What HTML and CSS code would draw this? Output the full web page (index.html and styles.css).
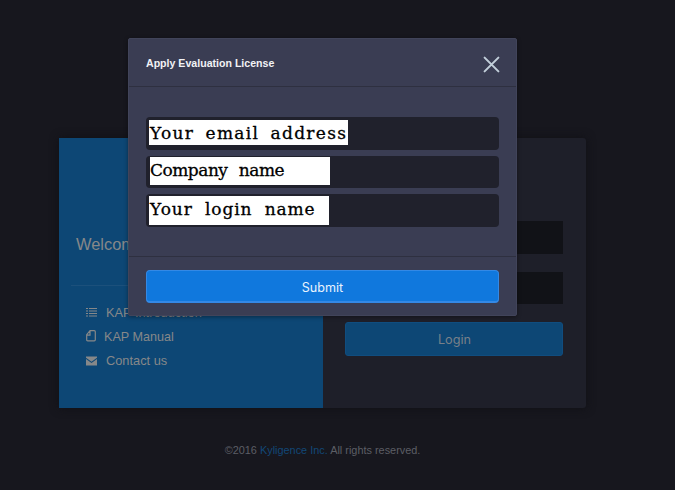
FILE: index.html
```
<!DOCTYPE html>
<html lang="en">
<head>
<meta charset="utf-8">
<title>Apply Evaluation License</title>
<link rel="stylesheet" href="styles.css">
</head>
<body>
<main class="page">
  <section class="login-card">
    <aside class="welcome">
      <h1 class="welcome-title">Welcome</h1>
      <ul class="links">
        <li><svg class="icon" viewBox="0 0 11 10"><path d="M0 1.500h2M0 4h2M0 6.500h2M0 9h2M3 1.500h8M3 4h8M3 6.500h8M3 9h8" stroke="currentColor" stroke-width="1.200"/></svg><span>KAP Introduction</span></li>
        <li class="manual"><svg class="icon doc" viewBox="0 0 10 12"><path d="M4 .7H8.300Q9.300.7 9.300 1.700V9.800q0 1-1 1H1.700q-1 0-1-1V4.600L4 .7V5.200H.7" fill="none" stroke="currentColor" stroke-width="1.200"/></svg><span>KAP Manual</span></li>
        <li><svg class="icon" viewBox="0 0 11 9"><path d="M0 0h11v1.200L5.500 5.200 0 1.200zM0 2.600 5.500 6.500 11 2.600V9H0z" fill="currentColor"/></svg><span>Contact us</span></li>
      </ul>
    </aside>
    <div class="login-form">
      <div class="login-input"></div>
      <div class="login-input"></div>
      <button class="login-button">Login</button>
    </div>
  </section>
  <footer class="footer">©2016 <span class="brand">Kyligence Inc.</span> All rights reserved.</footer>
</main>
<section class="modal" role="dialog">
  <header class="modal-header">
    <h2>Apply Evaluation License</h2>
    <svg class="close" viewBox="0 0 16 16"><path d="M1.500 1.500l13 13M14.500 1.500l-13 13" stroke="currentColor" stroke-width="1.900" stroke-linecap="round"/></svg>
  </header>
  <div class="modal-body">
    <div class="field"><span class="label email">Your email address</span></div>
    <div class="field"><span class="label company">Company name</span></div>
    <div class="field"><span class="label login">Your login name</span></div>
  </div>
  <div class="modal-footer"><button class="submit">Submit</button></div>
</section>
</body>
</html>
```
FILE: styles.css
```
* { box-sizing: border-box; }
body {
  margin: 0;
  width: 675px;
  height: 490px;
  overflow: hidden;
  background: #17171e;
  font-family: "Liberation Sans", sans-serif;
}
.page { padding: 138px 0 0 59px; }
.login-card {
  display: flex;
  width: 527px;
  height: 270px;
  border-radius: 3px;
  background: #1e1f29;
  box-shadow: 0 0 10px #101015;
}
.welcome {
  width: 264px;
  padding: 94px 12px 0;
  background: #0d4775;
  color: #868889;
}
.welcome-title {
  height: 54px;
  margin: 0;
  padding: 1px 0 0 5px;
  border-bottom: 1px solid #1c507b;
  font-size: 16.4px;
  font-weight: 400;
  line-height: 22px;
}
.links {
  list-style: none;
  margin: 0;
  padding: 14px 0 0 15px;
  font-size: 12.8px;
}
.links li { display: flex; align-items: center; gap: 9px; height: 24.4px; }
.icon { width: 11px; height: 10px; flex: none; }
.doc { width: 10px; height: 12px; margin-top: -2px; }
.manual span { margin-left: -1px; font-size: 12.6px; }
.login-form {
  display: flex;
  flex-direction: column;
  width: 263px;
  padding: 83px 23px 0 22px;
}
.login-input { height: 33px; margin-bottom: 18px; background: #111217; }
.login-input + .login-input { height: 32px; }
.login-button {
  height: 34px;
  padding: 0 0 0 1px;
  border: 1px solid #104d7f;
  border-radius: 3px;
  background: #0d4775;
  color: #788089;
  font: 12.7px Inter, sans-serif;
}
.footer {
  width: 527px;
  margin-top: 35px;
  text-align: center;
  font-size: 10.9px;
  line-height: 14px;
  color: #5c5e65;
}
.brand { color: #124777; }
.modal {
  position: absolute;
  top: 38px;
  left: 128px;
  width: 389px;
  height: 278px;
  border: 1px solid #41445a;
  border-radius: 2px;
  background: #3a3d53;
  box-shadow: 0 1px 4px rgba(0, 0, 0, .4);
}
.modal-header {
  display: flex;
  align-items: center;
  justify-content: space-between;
  height: 48px;
  padding: 3px 16px 0 17px;
  border-bottom: 1px solid #2e3040;
}
.modal-header h2 { margin: 0 0 3px; color: #f1f2f5; font: 700 10.6px "Liberation Sans", sans-serif; }
.close { width: 17px; height: 17px; color: #c2cfda; }
.modal-body {
  display: flex;
  flex-direction: column;
  gap: 6px;
  height: 170px;
  padding: 30px 17px 0;
  border-bottom: 1px solid #2e3040;
}
.field {
  height: 32.5px;
  padding: 3px 0 0 3px;
  border-radius: 4px;
  background: #20212c;
}
.label {
  display: block;
  background: #fff;
  color: #000;
  font: 17px/25px "DejaVu Serif", serif;
  -webkit-text-stroke: .3px #000;
  white-space: nowrap;
}
.email { width: 199px; height: 25px; padding-left: 1px; line-height: 27px; letter-spacing: 1.3px; word-spacing: 4.6px; }
.company { width: 180px; height: 28px; margin: -2px 0 0 1px; line-height: 26px; letter-spacing: -.5px; word-spacing: 6.5px; }
.login { width: 180px; height: 29px; margin-top: -1px; padding-left: 1px; line-height: 27px; letter-spacing: .9px; word-spacing: 6px; }
.modal-footer { padding: 13px 17px; }
.submit {
  display: block;
  width: 100%;
  height: 33px;
  padding: 2px 0 0;
  border: 1px solid #3489e5;
  border-bottom-width: 2px;
  border-radius: 4px;
  background: #1078dd;
  color: #e9f3fd;
  font: 12.6px Inter, sans-serif;
}
```
